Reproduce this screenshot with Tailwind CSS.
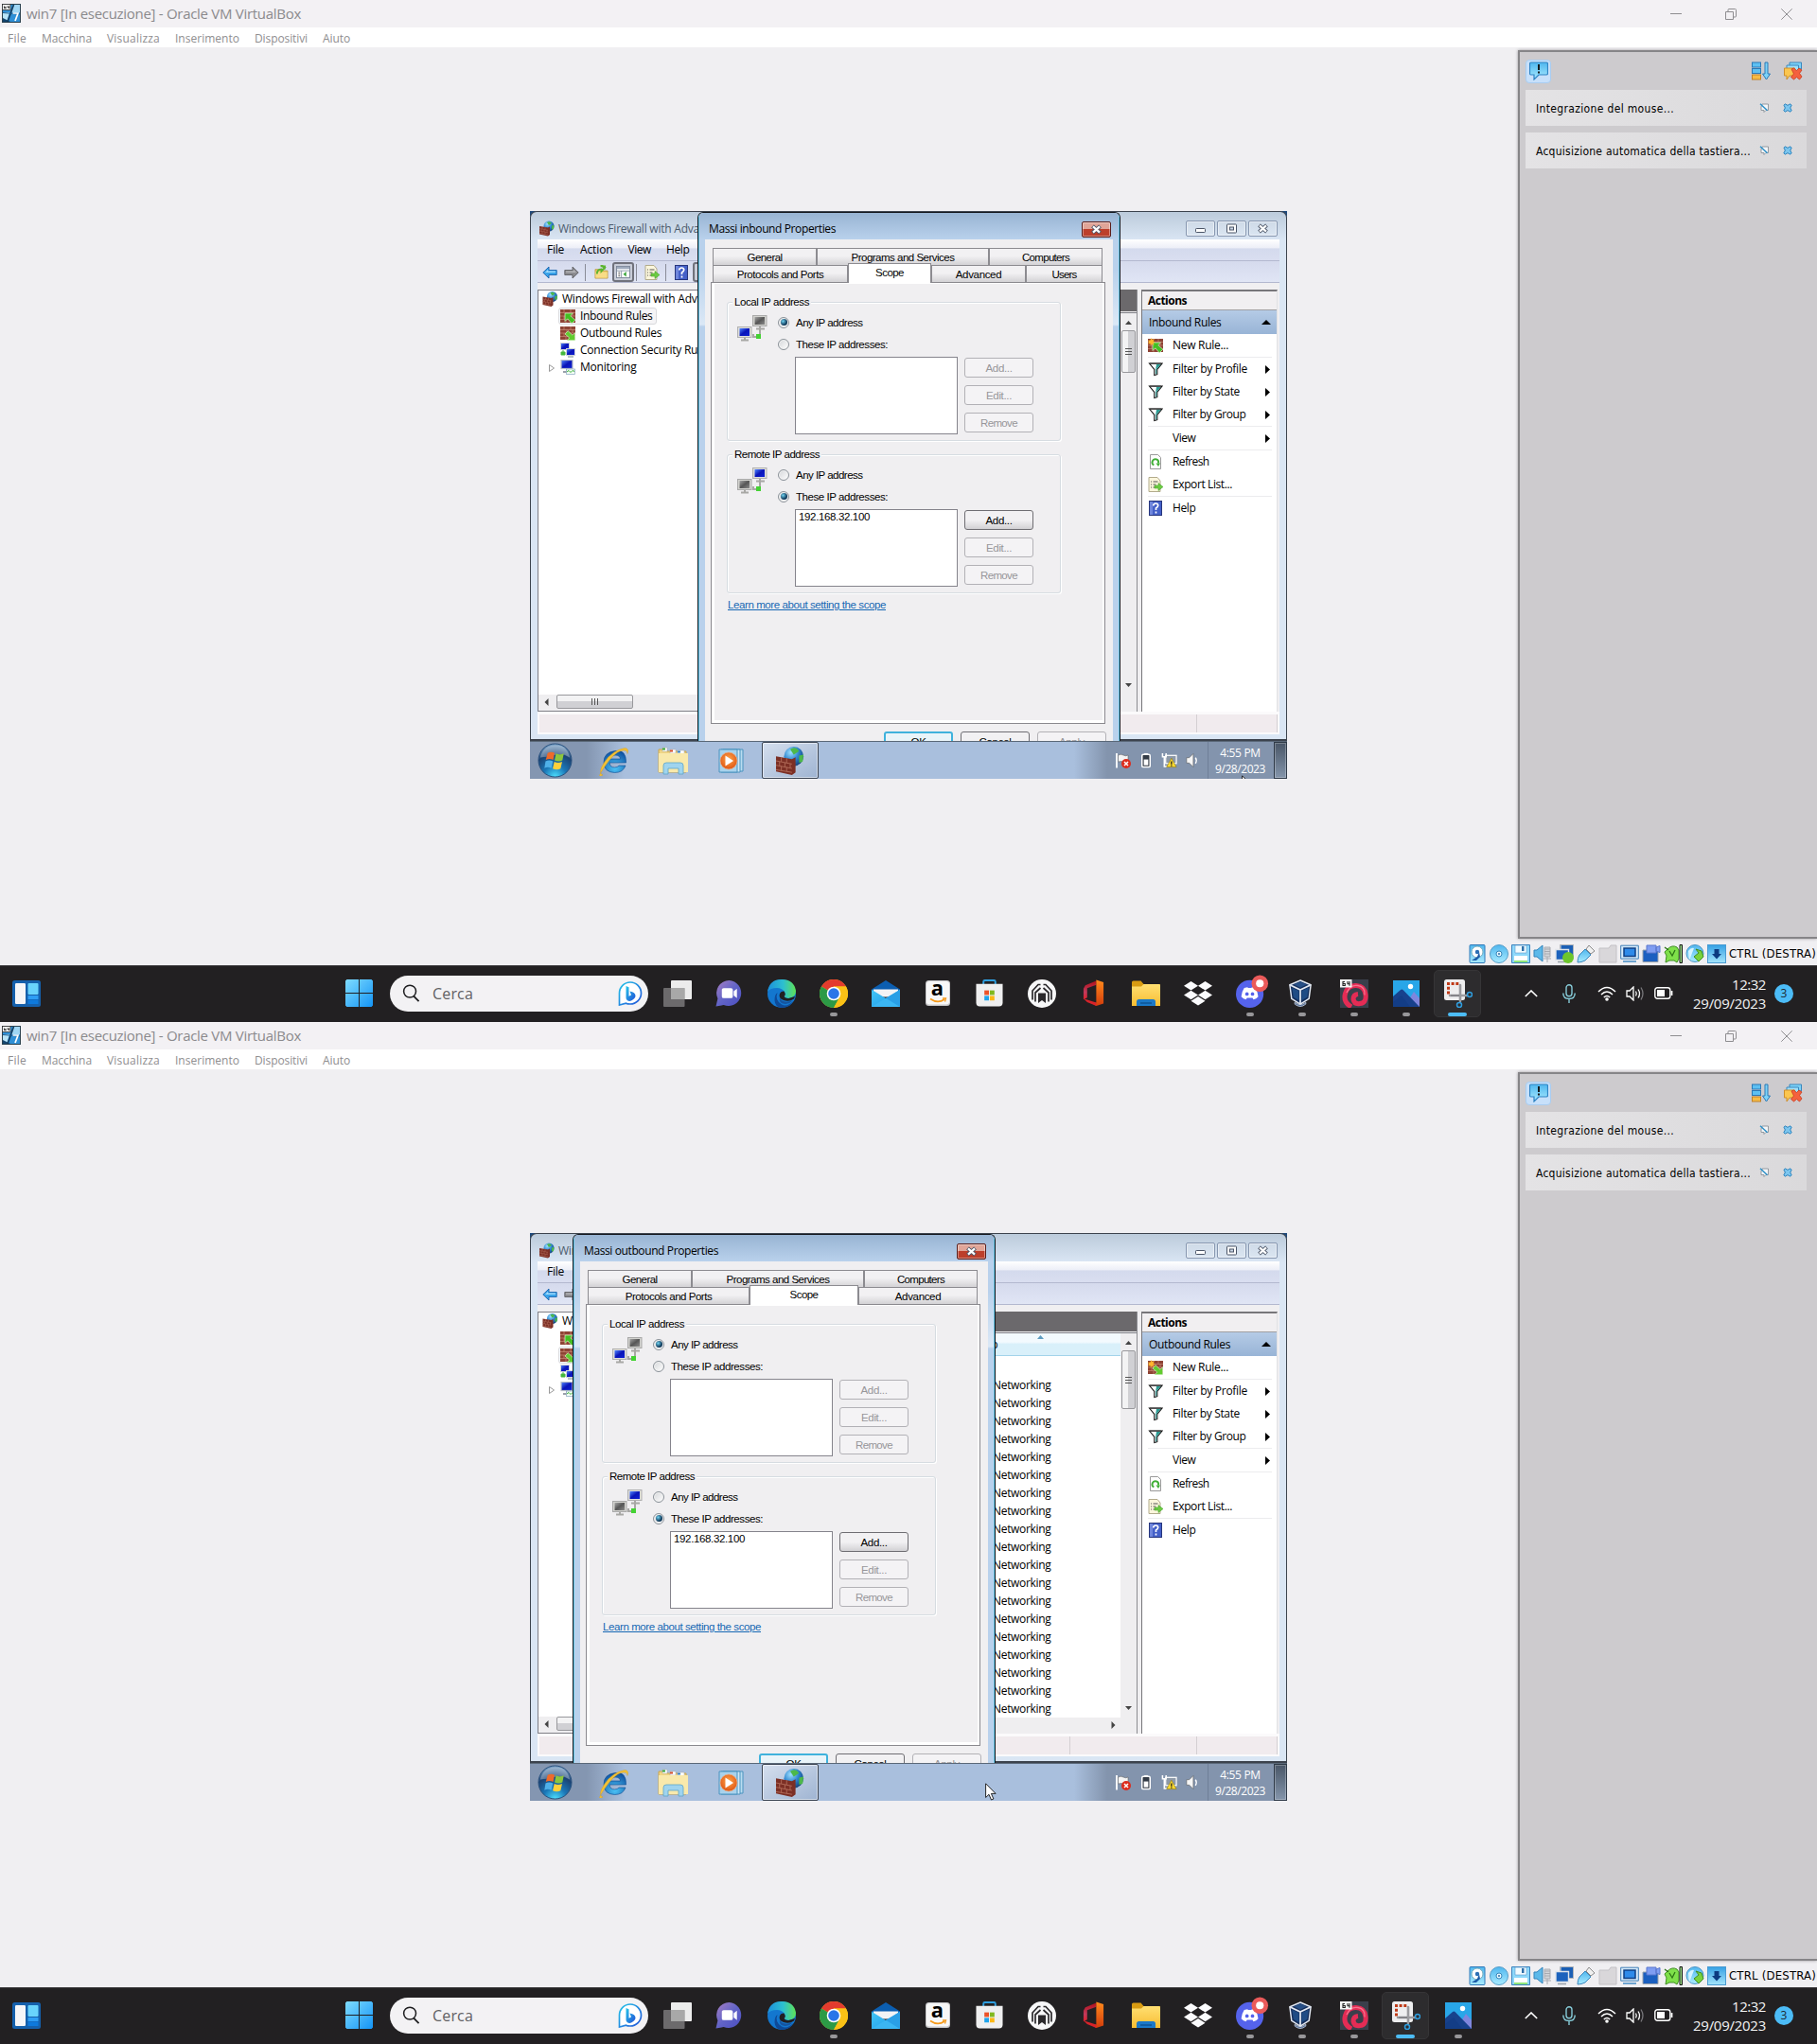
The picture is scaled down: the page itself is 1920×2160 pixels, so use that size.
<!DOCTYPE html>
<html lang="it">
<head>
<meta charset="utf-8">
<title>win7 [In esecuzione] - Oracle VM VirtualBox</title>
<script src="https://cdn.jsdelivr.net/npm/@tailwindcss/browser@4"></script>
</head>
<body class="w-[1920px] overflow-x-hidden bg-[#f0eff1] font-['Open_Sans','Noto_Sans',sans-serif] text-black">
<svg width="0" height="0" class="absolute" aria-hidden="true">
<defs>
<linearGradient id="g-win" x1="0" y1="0" x2="1" y2="1"><stop offset="0" stop-color="#7fdcff"/><stop offset="1" stop-color="#1494f5"/></linearGradient>
<linearGradient id="g-sky" x1="0" y1="0" x2="0" y2="1"><stop offset="0" stop-color="#35a0e4"/><stop offset="1" stop-color="#a4e4fb"/></linearGradient>
<linearGradient id="g-cyan" x1="0" y1="0" x2="0" y2="1"><stop offset="0" stop-color="#4fb6ee"/><stop offset="1" stop-color="#a9ebff"/></linearGradient>
<linearGradient id="g-teams" x1="0" y1="0" x2="1" y2="1"><stop offset="0" stop-color="#a87fc4"/><stop offset=".5" stop-color="#6264c7"/><stop offset="1" stop-color="#4a4dc0"/></linearGradient>
<linearGradient id="g-edge" x1="0" y1="0" x2="1" y2="0"><stop offset="0" stop-color="#1c8fdc"/><stop offset=".55" stop-color="#2dbfd0"/><stop offset="1" stop-color="#5fe255"/></linearGradient>
<linearGradient id="g-mail" x1="0" y1="0" x2="1" y2="1"><stop offset="0" stop-color="#42c6f7"/><stop offset="1" stop-color="#1f97e6"/></linearGradient>
<linearGradient id="g-fold" x1="0" y1="0" x2="0" y2="1"><stop offset="0" stop-color="#ffdf72"/><stop offset="1" stop-color="#f8bd32"/></linearGradient>
<linearGradient id="g-off" x1="0" y1="0" x2="0" y2="1"><stop offset="0" stop-color="#ff8a1c"/><stop offset="1" stop-color="#d23c0c"/></linearGradient>
<linearGradient id="g-offl" x1="0" y1="0" x2="0" y2="1"><stop offset="0" stop-color="#b0101a"/><stop offset=".6" stop-color="#c23a5c"/><stop offset="1" stop-color="#e0202a"/></linearGradient>
<linearGradient id="g-bing" x1="0" y1="0" x2="1" y2="1"><stop offset="0" stop-color="#25c5e8"/><stop offset="1" stop-color="#2152d9"/></linearGradient>
<radialGradient id="g-orb" cx=".5" cy="1" r="1"><stop offset="0" stop-color="#4de1ff"/><stop offset=".35" stop-color="#1b78b8"/><stop offset=".7" stop-color="#1b4374"/><stop offset="1" stop-color="#7ea6cb"/></radialGradient>
<radialGradient id="g-globe" cx=".35" cy=".3" r=".8"><stop offset="0" stop-color="#9fe0ff"/><stop offset=".5" stop-color="#2f86cf"/><stop offset="1" stop-color="#12386e"/></radialGradient>
<radialGradient id="g-ie" cx=".5" cy=".8" r=".8"><stop offset="0" stop-color="#4cc4f7"/><stop offset="1" stop-color="#0d4f9f"/></radialGradient>
<radialGradient id="g-wmp" cx=".5" cy=".4" r=".7"><stop offset="0" stop-color="#ffa54a"/><stop offset="1" stop-color="#d9480a"/></radialGradient>
<linearGradient id="g-scr" x1="0" y1="0" x2="1" y2="1"><stop offset="0" stop-color="#4f86ff"/><stop offset=".5" stop-color="#0a14b8"/><stop offset="1" stop-color="#0f22d6"/></linearGradient>
<linearGradient id="g-scrg" x1="0" y1="0" x2="1" y2="1"><stop offset="0" stop-color="#a4a4a4"/><stop offset=".5" stop-color="#565656"/><stop offset="1" stop-color="#8a8a8a"/></linearGradient>
</defs>
<symbol id="vm7" viewBox="0 0 20 20"><rect x=".5" y=".5" width="19" height="19" fill="#2f8fd6" stroke="#2b4250"/><path d="M1 9h7l-3 10H1z" fill="#b9e4f8"/><path d="M12 1h7v8h-9z" fill="#9fd6f4"/><path d="M1 15l8 4H1z" fill="#14456e"/><path d="M12.500 1L6 19" stroke="#123a5c" stroke-width="1.600"/><path d="M1 9.500l18 1.500" stroke="#1b5a8c"/><rect x=".5" y=".5" width="8.500" height="6" fill="#f2f2f2" stroke="#333" stroke-width=".8"/><path d="M2.500 2.500v2.300h1.700V3.600H2.500M6 2.300v1.500h1.800M7.500 2.300v2.700" stroke="#222" fill="none" stroke-width=".8"/><path d="M11.500 10h5.500L14 18" stroke="#fff" fill="none" stroke-width="1.700"/></symbol>
<symbol id="wall" viewBox="0 0 16 16"><rect y="1" width="16" height="14" fill="#8e4335"/><path d="M0 4.500h16M0 8h16M0 11.500h16M4 1v3.500M11 1v3.500M7 4.500V8M13 4.500V8M4 8v3.500M10 8v3.500M6 11.500V15" stroke="#c98a76" stroke-width=".7"/></symbol>
<symbol id="fw" viewBox="0 0 16 16"><circle cx="10" cy="5.500" r="5.500" fill="url(#g-globe)"/><path d="M8 1.500q3-2 5 1l-3 2zM13 5l2.500-.5-.5 4-2 .5z" fill="#4db84a"/><path d="M0 5.500l9 1.500 2-1v8.500l-2 1.500-9-2z" fill="#7c2f25"/><path d="M0 8l9 1.800M0 10.500l9 1.800M0 13l9 1.500M3 6v2.500M6 6.500v2.800M2 8.500v2.500M5 9v2.500M8 9.500v2.500M3 11v2.500M6 11.500V14" stroke="#b06a58" stroke-width=".5"/></symbol>
<symbol id="in" viewBox="0 0 16 16"><use href="#wall"/><path d="M5 5h8.500l-2.700 2.700 5 4.500-3.600 3.600-4.500-5L5 13.500z" fill="#43bf22" stroke="#d7f5c8" stroke-width=".7"/></symbol>
<symbol id="out" viewBox="0 0 16 16"><use href="#wall"/><path d="M15.500 15.700H7L9.700 13 5 9l3.200-3.300L13 10.200l2.500-2.500z" fill="#62cc30" stroke="#d7f5c8" stroke-width=".7"/></symbol>
<symbol id="newin" viewBox="0 0 16 16"><use href="#in"/><path d="M3.500 0l.8 2.100 2.700-1-1.300 2.400 2.300 1-2.400.8 1 2.600-2.500-1.400L3 8.500l-.6-2.600L0 6.500l1.200-2L0 2.500l2.300.2z" fill="#ffb52e"/></symbol>
<symbol id="newout" viewBox="0 0 16 16"><use href="#out"/><path d="M3.500 0l.8 2.100 2.700-1-1.300 2.400 2.300 1-2.400.8 1 2.600-2.500-1.400L3 8.500l-.6-2.600L0 6.500l1.200-2L0 2.500l2.300.2z" fill="#ffb52e"/></symbol>
<symbol id="csr" viewBox="0 0 16 16"><rect x=".5" y=".5" width="9" height="7" fill="url(#g-scr)" stroke="#cfd3da"/><rect x="6.500" y="6.500" width="9" height="7" fill="url(#g-scr)" stroke="#cfd3da"/><path d="M8 15h6" stroke="#9aa" stroke-width="1.400"/><path d="M1 10h4v3H1zM3 8v5" fill="#45b63d" stroke="#45b63d"/></symbol>
<symbol id="mon" viewBox="0 0 16 16"><rect x="1" y=".5" width="12" height="9" fill="url(#g-scr)" stroke="#b9bfc9" stroke-width="1.200"/><path d="M3 13h8M7 10v3" stroke="#9aa0aa" stroke-width="1.800"/><rect x="6.500" y="10" width="9" height="5.500" fill="#f2fff2" stroke="#8aa5c4" stroke-width=".7"/><path d="M7 13l2-1.500 2 2 2-2 2 1" stroke="#3dac3d" fill="none"/></symbol>
<symbol id="back" viewBox="0 0 16 16"><path d="M.8 8L7 2v3.500h8.200v5H7V14z" fill="#3aa4ea" stroke="#1c64ae" stroke-width=".9"/><path d="M3 8l3-3v1.500h8v1.300z" fill="#a6dcfb"/></symbol>
<symbol id="fwd" viewBox="0 0 16 16"><path d="M15.200 8L9 2v3.500H.8v5H9V14z" fill="#8c8c90" stroke="#5f5f63" stroke-width=".9"/><path d="M13 8l-3-3v1.500H2v1.300z" fill="#b5b5b8"/></symbol>
<symbol id="up" viewBox="0 0 16 16"><path d="M1 5h5l1 1.500h8V15H1z" fill="#ecc964" stroke="#b8923a" stroke-width=".8"/><path d="M1.500 8h13v6.500h-13z" fill="#f8dc86"/><path d="M3 10c0-3 2-5 5-5.200V7l4-4.200L8 .5V2.500" fill="none" stroke="#5cb531" stroke-width="2"/><path d="M7 .5h6l-1 5z" fill="#5cb531"/></symbol>
<symbol id="pane" viewBox="0 0 16 14"><rect x=".5" y=".5" width="15" height="13" fill="#fff" stroke="#7b8698"/><path d="M1 1h14v2.500H1z" fill="#9fabbd"/><path d="M1 5.500h14M6 5.500V13" stroke="#8c98ab"/><path d="M2.500 7.500h2M2.500 9.500h2M2.500 11.500h2" stroke="#555"/><path d="M11.500 6.500v6L8 9.500z" fill="#3aa53a"/></symbol>
<symbol id="export" viewBox="0 0 16 16"><path d="M1 .5h9L13 4v11.500H1z" fill="#fbf6dc" stroke="#b2ab8c"/><path d="M3 5h1M5.500 5h5M3 8h1M5.500 8h3M3 11h1M5.500 11h3" stroke="#555"/><path d="M7 9h4V6.500l5 4-5 4V12H7z" fill="#6ccb42" stroke="#3d9a24" stroke-width=".5"/></symbol>
<symbol id="help" viewBox="0 0 16 16"><rect x="1.500" y=".5" width="13" height="15" fill="#4460c8" stroke="#27367c"/><path d="M2 1h3v14H2z" fill="#6f86dc"/><path d="M5.800 5.500q0-2.500 2.500-2.500t2.400 2.300q0 1.400-2.200 2.700v2M8.500 11.500v2" stroke="#fff" fill="none" stroke-width="1.700"/></symbol>
<symbol id="filter" viewBox="0 0 16 16"><path d="M1.500 2h13.500L9.800 8.500v5.200l-3 .8v-6z" fill="#fff" stroke="#111" stroke-width="1.100"/><path d="M9 3h4.500L9.200 8.300v5h-1V8z" fill="#2c9c94"/><path d="M2 2.200h12" stroke="#444" stroke-width="1.300"/></symbol>
<symbol id="refresh" viewBox="0 0 16 16"><path d="M2.500.5h8l3 3v12h-11z" fill="#fdfdfd" stroke="#9a9a9a"/><path d="M6.300 11.500A3.300 3.300 0 1 1 11 9.500" fill="none" stroke="#3fae35" stroke-width="1.900"/><path d="M8.500 9.500h4.500l-2 3.500z" fill="#3fae35"/></symbol>
<symbol id="pcA" viewBox="0 0 32 28"><rect x="16.500" y=".5" width="14.500" height="11" fill="#d2d2ce" stroke="#a9a9a9"/><rect x="18.500" y="2" width="10.500" height="8" fill="url(#g-scrg)"/><path d="M20 14.500h9M24 12v11h-7v-3" stroke="#a8a8a5" fill="none" stroke-width="2"/><path d="M20 20h5v5h-5z" fill="#44d233"/><rect x=".5" y="12.500" width="14.500" height="11" fill="#dededc" stroke="#b0b0b0"/><rect x="2.500" y="14" width="10.500" height="8" fill="url(#g-scr)"/><path d="M4 26.500h8M8 24v2" stroke="#a8a8a5" stroke-width="2"/></symbol>
<symbol id="pcB" viewBox="0 0 32 28"><rect x="16.500" y=".5" width="14.500" height="11" fill="#dededc" stroke="#b0b0b0"/><rect x="18.500" y="2" width="10.500" height="8" fill="url(#g-scr)"/><path d="M20 14.500h9M24 12v11h-7v-3" stroke="#a8a8a5" fill="none" stroke-width="2"/><path d="M20 20h5v5h-5z" fill="#44d233"/><rect x=".5" y="12.500" width="14.500" height="11" fill="#d2d2ce" stroke="#a9a9a9"/><rect x="2.500" y="14" width="10.500" height="8" fill="url(#g-scrg)"/><path d="M4 26.500h8M8 24v2" stroke="#a8a8a5" stroke-width="2"/></symbol>
<symbol id="orb" viewBox="0 0 38 38"><circle cx="19" cy="19" r="18" fill="url(#g-orb)" stroke="#29507c"/><path d="M3 16Q6 3 19 2.500T35 16Q27 11 19 13T3 16z" fill="#fff" opacity=".3"/><path d="M11 11q4-2 7.500 0L17 18.500q-4-2-8 0z" fill="#ee6a2a"/><path d="M20 11.500q4 2 8.500 0L27 19q-4 2-8.500 0z" fill="#8cc63e"/><path d="M8.700 20q4-2 8 0L15 27.500q-4-2-7.500 0z" fill="#4fb0e8"/><path d="M18.200 20.500q4 2 8.500 0L25 28q-4 2-8.500 0z" fill="#fcd03a"/></symbol>
<symbol id="ie" viewBox="0 0 32 32"><path d="M28.500 18H11q.5 5 5.500 5 3 0 4.500-2h7q-2.500 7.500-11.500 7.500Q5 28 5 17.500T17 5.500 28.500 18zM11 14h11.500q-.5-4-5.500-4t-6 4z" fill="url(#g-ie)" stroke="#0c4a92" stroke-width=".6"/><path d="M4 31Q-2 29 6 17T27 2.500q5 0 3 6 0-5-7-3T6 22 4 31z" fill="#f2c136" stroke="#d59a1c" stroke-width=".4"/></symbol>
<symbol id="explorer7" viewBox="0 0 32 30"><path d="M1 3h8l1 2h20v22H1z" fill="#f0d584" stroke="#caa64c"/><path d="M5 1h5v4H5zM13 3h6v4h-6zM21 4h7v4h-7z" fill="#fff" stroke="#aaa" stroke-width=".5"/><path d="M5 1.500h3v2H5z" fill="#36a436"/><path d="M13 3.500h3v2h-3z" fill="#d44b28"/><path d="M21 4.500h3v2h-3z" fill="#347fc4"/><path d="M1 7h31v20H1z" fill="#f9e9ab"/><path d="M6 29v-9q0-3 3-3h15q3 0 3 3v9h-5v-6H11v6z" fill="#9fd4ee" stroke="#5ea4c8" stroke-width=".8"/></symbol>
<symbol id="wmp" viewBox="0 0 30 26"><path d="M5 1h21v23H5z" fill="#b9dcf0" stroke="#4b93bf"/><path d="M3 1h20v24H3z" fill="#cfe8f6" stroke="#4b93bf"/><path d="M1 1h19v24H1z" fill="#a8d2ec" stroke="#4b93bf"/><circle cx="11" cy="13" r="9" fill="url(#g-wmp)" stroke="#e9b08a" stroke-width=".7"/><path d="M7.500 7.500l8.500 5.500-8.500 5.500z" fill="#fff"/></symbol>
<symbol id="flag" viewBox="0 0 18 18"><path d="M2 1v15.500" stroke="#fff" stroke-width="1.800"/><path d="M3.500 3q3-1.500 5.500 0t5 0v7q-3 1-5 0t-5.500 0z" fill="#f4f4f4" stroke="#555" stroke-width=".5"/><circle cx="12" cy="12" r="5" fill="#dd2c1c"/><path d="M10 10l4 4M14 10l-4 4" stroke="#fff" stroke-width="1.500"/></symbol>
<symbol id="bat7" viewBox="0 0 12 18"><rect x="1.500" y="2.500" width="9" height="14" rx="1.500" fill="#333b46" stroke="#fff" stroke-width="1.600"/><path d="M4 1h4v1.500H4z" fill="#fff"/><rect x="3.500" y="8" width="5" height="6.500" fill="#fff"/></symbol>
<symbol id="net7" viewBox="0 0 18 18"><rect x="5" y="3.500" width="12" height="9" fill="#8d99a8" stroke="#fff" stroke-width="1.300"/><path d="M1.500 1v4h4V1M3.500 5v11h3" stroke="#fff" fill="none" stroke-width="1.600"/><path d="M11.500 6.500l5.500 10H6z" fill="#fbd92e" stroke="#8c7610" stroke-width=".6"/><path d="M11.500 10v3.500M11.500 14.300v1.200" stroke="#222" stroke-width="1.400"/></symbol>
<symbol id="spk7" viewBox="0 0 16 18"><path d="M2 6h3l4.500-4.500v15L5 12H2z" fill="#f6f6f6" stroke="#555" stroke-width=".6"/><path d="M12 6q2 3 0 6.500" stroke="#fff" fill="none" stroke-width="1.500"/></symbol>
<symbol id="cursor" viewBox="0 0 12 19"><path d="M.6.800v14.700l3.400-3.200 2.500 5.700 2.400-1-2.500-5.600h4.700z" fill="#fff" stroke="#111" stroke-width=".9"/></symbol>
<symbol id="s-hdd" viewBox="0 0 20 20"><rect x="2" y=".5" width="16" height="19" rx="1" fill="url(#g-cyan)" stroke="#2f78b8"/><circle cx="10" cy="8" r="6" fill="#fff" stroke="#7ab"/><circle cx="10" cy="8" r="2.200" fill="#2d6fb5"/><path d="M4 17l6-4 2-5 1 5-4 4z" fill="#1c5ca8"/></symbol>
<symbol id="s-cd" viewBox="0 0 20 20"><circle cx="10" cy="10" r="9.500" fill="url(#g-cyan)" stroke="#559dc8"/><circle cx="10" cy="10" r="3" fill="#e8f8ff" stroke="#3b86ba"/><circle cx="10" cy="10" r="1" fill="#2f6fa5"/></symbol>
<symbol id="s-fd" viewBox="0 0 20 20"><path d="M.5.500h19v19H.5z" fill="#8ed8fa" stroke="#3b82be"/><path d="M4 1h12v8H4z" fill="#f2fbff" stroke="#5a9ccc" stroke-width=".6"/><path d="M11 2h2.500v5H11z" fill="#2f6fa8"/><path d="M3 12h14v7H3z" fill="#fff"/><path d="M3 17h14v2H3z" fill="#8fe67c"/></symbol>
<symbol id="s-au" viewBox="0 0 20 20"><path d="M1 6h3l6-5v17l-6-5H1z" fill="#5cb9ea" stroke="#3484bb"/><path d="M12 3h6v10h-6zM11 15h8M15 13v6" fill="#d4d6da" stroke="#a8aab0"/><path d="M12 5h6M12 7.500h6M12 10h6" stroke="#a8aab0"/></symbol>
<symbol id="s-net" viewBox="0 0 20 20"><path d="M6 .5h13.500v12H6z" fill="#1b5fb5" stroke="#e8e8e8"/><path d="M5.500.500h14v12h-14z" fill="none" stroke="#8a9099" stroke-width=".6"/><path d="M1 5.500h13.500v11H1z" fill="#1c62bd" stroke="#dfe4ea" stroke-width="1.400"/><path d="M3 18.500h9" stroke="#9aa2ab" stroke-width="1.500"/></symbol>
<symbol id="s-netg" viewBox="0 0 20 20"><use href="#s-net"/><circle cx="14" cy="14" r="6" fill="#6dc62c"/></symbol>
<symbol id="s-usb" viewBox="0 0 20 20"><path d="M13 1l6 6-4 3-5-5z" fill="#f0f0f0" stroke="#8a8a8a"/><path d="M9 5l6 6-6 6q-4 2-8 2 0-5 2-8z" fill="url(#g-cyan)" stroke="#3b88be"/></symbol>
<symbol id="s-sf" viewBox="0 0 20 20"><path d="M1 4h10l2-3h6v18H1z" fill="#d9d7da" stroke="#c3c1c5"/></symbol>
<symbol id="s-dsp" viewBox="0 0 20 20"><path d="M.7 1.200h18.600v14H.7z" fill="#d8ecfb" stroke="#3f7db6"/><path d="M4 4h12v8.500H4z" fill="#2f8bea" stroke="#0e3f85" stroke-width="1.500"/><path d="M3 18h14" stroke="#6ea4d0" stroke-width="2"/></symbol>
<symbol id="s-rec" viewBox="0 0 20 20"><path d="M1 6h16v12.500H1z" fill="#1b5fc0" stroke="#9aa2ab"/><path d="M5 1h10v8H5zM15 3l4-1.500v7L15 7z" fill="#7f9df2" stroke="#5a76cc"/></symbol>
<symbol id="s-cpu" viewBox="0 0 20 20"><path d="M4 5q5-5 10-2l2 3v9l-2 4-3-2H6l-4 2 1-7-2-4z" fill="#7fe04a" stroke="#3f8e22"/><path d="M6 7l3 5 3-6M1 3l4 3" stroke="#2c7416" fill="none" stroke-width="1.300"/><path d="M17 .5h2.500v19H17z" fill="#9fe08a" stroke="#111"/></symbol>
<symbol id="s-mouse" viewBox="0 0 20 20"><circle cx="10" cy="9.500" r="9" fill="url(#g-cyan)" stroke="#4a94c6"/><path d="M9 13l5-4-3-4 6 2 2 6-5 5z" fill="#79d23c" stroke="#3f8e22"/><path d="M3 7q3-4 6-3L4 17z" fill="#d7f4ff"/></symbol>
<symbol id="s-kbd" viewBox="0 0 20 20"><rect x=".5" y=".5" width="19" height="19" fill="url(#g-sky)" stroke="#4a9bd2"/><path d="M7.500 5h5v5H15l-5 5.500L5 10h2.500z" fill="#0c3a80"/></symbol>
<symbol id="n-bub" viewBox="0 0 20 20"><path d="M2 1h16q1.500 0 1.500 1.500v10q0 1.500-1.500 1.500h-8l-5 5v-5H2Q.5 14 .5 12.500v-10Q.5 1 2 1z" fill="url(#g-cyan)" stroke="#2e83c4" stroke-width="1.200"/><path d="M10 3v6M10 10.500v2" stroke="#111" stroke-width="1.900"/></symbol>
<symbol id="n-sort" viewBox="0 0 20 20"><rect x=".5" y="1" width="9" height="5" fill="#5dc0f2" stroke="#2b79b6"/><rect x=".5" y="7.500" width="9" height="5" fill="#5dc0f2" stroke="#2b79b6"/><rect x=".5" y="14" width="9" height="5" fill="#f6bb45" stroke="#c0812a"/><path d="M14 1h3v12h2.500l-4 6-4-6H14z" fill="#7dd3f8" stroke="#2b79b6"/></symbol>
<symbol id="n-clr" viewBox="0 0 20 20"><path d="M6 1h12.500v7H6z" fill="#7dd3f8" stroke="#3a87be"/><path d="M3 4h12.500v8H3z" fill="#9fe0fb" stroke="#3a87be"/><path d="M.5 7h11v8H6l-3 4v-4H.5z" fill="#fbc64f" stroke="#cf8f2c"/><path d="M8 8l2.500-1 3 2.500L16 7l3 2-2.500 3.500L19 16l-2.500 3-3-2.500L10.500 19 7.500 16.500l3-3.500z" fill="#f4613e" stroke="#c93a1c" stroke-width=".8"/></symbol>
<symbol id="n-pin" viewBox="0 0 10 10"><path d="M3 1h6.500v6.500H7L5 9.500v-2H2V4z" fill="#f4f6f8" stroke="#8a9199" stroke-width=".9"/><path d="M1 .8l7.500 7" stroke="#2e90c8" stroke-width="1.500"/></symbol>
<symbol id="n-x" viewBox="0 0 10 10"><path d="M1 2.200L2.300.8 5 2.400 7.700.8 9.200 2.200 7.700 5l1.500 2.800L7.700 9.200 5 7.600 2.300 9.200.8 7.800 2.400 5z" fill="#7cc6ef" stroke="#2d83bd" stroke-width="1"/></symbol>
<symbol id="widgets" viewBox="0 0 30 28"><rect width="30" height="28" rx="2.500" fill="#1560ac"/><rect x="3" y="3" width="11" height="22" rx="1.200" fill="#f6f6f8"/><rect x="16.500" y="3" width="11" height="12" rx="1" fill="#69d3fc"/><rect x="16.500" y="16" width="11" height="4" fill="#2e9df4"/><rect x="16.500" y="20.500" width="11" height="4.500" fill="#0e79dc"/></symbol>
<symbol id="start" viewBox="0 0 29 29"><path d="M1.500 0H14v14H0V1.500zM15 0h12.500L29 1.500V14H15zM0 15h14v14H1.500L0 27.500zM15 15h14v12.500L27.500 29H15z" fill="url(#g-win)"/></symbol>
<symbol id="glass" viewBox="0 0 20 20"><circle cx="8.500" cy="8" r="6.800" fill="none" stroke="#1d1d1f" stroke-width="1.600"/><path d="M13 13.500l5.500 5.500" stroke="#1d1d1f" stroke-width="1.900"/></symbol>
<symbol id="bing" viewBox="0 0 26 26"><path d="M1.500 25V12.500A11.500 11.500 0 1 1 13 24q-3 0-4.500-.8Z" fill="#fff" stroke="url(#g-bing)" stroke-width="1.700"/><path d="M8.500 5l3 1.200v9.500l2.500-1.200-1.500-4q6 1.200 6 4.800 0 3-4.500 5.200-2 1-4-.3-1.500-1-1.500-2.700z" fill="url(#g-bing)"/></symbol>
<symbol id="tview" viewBox="0 0 30 28"><rect x="8" y="0" width="22" height="20" rx="1" fill="#ececec"/><rect x="0" y="8" width="22.500" height="20" rx="1" fill="#8b8a8b" fill-opacity=".7"/><path d="M8 8h14.500v12H8z" fill="#a8a8a8"/></symbol>
<symbol id="teams" viewBox="0 0 30 30"><path d="M15 1A14 14 0 1 1 9 28L.5 29.500 2.500 21A14 14 0 0 1 15 1z" fill="url(#g-teams)"/><rect x="7" y="9.500" width="12" height="11" rx="2" fill="#fff"/><path d="M20 13l3.500-3v10.500L20 17.500z" fill="#fff"/></symbol>
<symbol id="edge" viewBox="0 0 30 30"><circle cx="15" cy="15" r="15" fill="#1377cf"/><path d="M0 13Q2 0 15 0t15 12q0 6-6 7.500-5 1-6.500-1.500 2-3 0-5.500Q15 9 10 9 3 9 0 13z" fill="url(#g-edge)"/><path d="M10.500 14q-3 8 4.500 12.500 6 3 12-3.500-3 7-12 7-7-.5-7.500-8Q7.500 16 10.500 14z" fill="#0e4a98"/><path d="M17.500 12.500q2.500 3.500 0 5.500 2 3 6.500 1.500l5-1.500-1 2.500q-5 3.500-11 1.500t-4-7q1-3 4.500-2.500z" fill="#211f21"/><path d="M13 19q2 7 13.500 3.500Q21 28 15 25q-3-2-2-6z" fill="#15549f"/></symbol>
<symbol id="chrome" viewBox="0 0 30 30"><circle cx="15" cy="15" r="15" fill="#fbc116"/><path d="M15 15L2 7.500A15 15 0 0 1 28 7.500H15z" fill="#e33b2e"/><path d="M2 7.500A15 15 0 0 0 15 30l6.500-11.200L15 15z" fill="#2c9a46"/><path d="M28 7.500H15V22l6-3L15 30A15 15 0 0 0 28 7.500z" fill="#fbc116"/><circle cx="15" cy="15" r="7.300" fill="#fff"/><circle cx="15" cy="15" r="5.800" fill="#2a76e8"/></symbol>
<symbol id="mail" viewBox="0 0 30 28"><path d="M15 0l15 9.500v6H0v-6z" fill="#0c5eb0"/><path d="M2 9.500h26v8H2z" fill="#f3f3f5"/><path d="M0 9.800L15 19l15-9.200V28H0z" fill="url(#g-mail)"/><path d="M15 18.800L30 28V10z" fill="#2a9fe6"/><path d="M0 28L15 18.800 30 28z" fill="#3bb6f3"/></symbol>
<symbol id="amazonbg" viewBox="0 0 26 27"><rect width="26" height="27" rx="3.500" fill="#c8c8ca"/><rect x="1" y="1" width="24" height="24.500" rx="3" fill="#f7f7f7"/><path d="M5 19.500q8 5.500 15 .5" stroke="#f59a1b" stroke-width="1.700" fill="none"/><path d="M18 19h3.500l-1 3.500" fill="none" stroke="#f59a1b" stroke-width="1.300"/></symbol>
<symbol id="store" viewBox="0 0 30 30"><path d="M8.500 6V2.500Q8.500 1 10 1h10q1.500 0 1.500 1.500V6" fill="none" stroke="#2f9fe0" stroke-width="2"/><path d="M.5 5h29v20q0 4.500-4 4.500h-21q-4 0-4-4.500z" fill="#efeff0"/><path d="M9.500 12h5v5h-5z" fill="#ec5228"/><path d="M15.500 12h5v5h-5z" fill="#80b81e"/><path d="M9.500 18h5v5h-5z" fill="#1ea3ec"/><path d="M15.500 18h5v5h-5z" fill="#fbb816"/></symbol>
<symbol id="omen" viewBox="0 0 30 30"><circle cx="15" cy="15" r="15" fill="#f7f7f8"/><path d="M5 21.500V12L11 5.500h2.500M25 21.500V12L19 5.500h-2.500M13.500 9L8 14v9.500M16.500 9l5.500 5v9.500" stroke="#2b292c" stroke-width="1.700" fill="none"/><path d="M11 25V14.500h8V25l-4-3z" fill="#2b292c"/></symbol>
<symbol id="office" viewBox="0 0 26 30"><path d="M16 1.500L4 6.500 2 10v12l4-2V9.500L16 6z" fill="url(#g-offl)"/><path d="M16 .5l8 2.500v23.500L16 29l-5-3 5-.5z" fill="url(#g-off)"/><path d="M2 21l14 4.500V29L6 25z" fill="#d8232a"/></symbol>
<symbol id="folder" viewBox="0 0 30 28"><path d="M0 2q0-1.500 1.500-1.500h8L12.500 4H30v6H0z" fill="#d99c12"/><path d="M0 6.500h10L12.500 4H28.500Q30 4 30 5.500V27H0z" fill="url(#g-fold)"/><path d="M5 27v-4.500Q5 20 7.500 20h15q2.500 0 2.500 2.500V27z" fill="#1a78c8"/><path d="M9 24h12" stroke="#0d5596" stroke-width="1.500"/></symbol>
<symbol id="dropbox" viewBox="0 0 30 26"><path d="M7.500 0L15 4.800 7.500 9.600 0 4.800zM22.500 0L30 4.800 22.500 9.600 15 4.800zM7.500 9.700L15 14.500l-7.500 4.800L0 14.500zM22.500 9.700l7.500 4.800-7.500 4.800-7.500-4.800zM15 16l7.500 4.800L15 25.500l-7.500-4.700z" fill="#fbfbfd"/></symbol>
<symbol id="discord" viewBox="0 0 36 36"><circle cx="15" cy="21" r="15" fill="#5563ec"/><path d="M9 14.500l3.500-1 .8 1h3.400l.8-1 3.500 1q3 4.500 3.200 9.500-2 2.500-5.200 3l-1-1.800h-6L11 27q-3-.5-5.200-3Q6 19 9 14.500z" fill="#fff"/><circle cx="12" cy="21" r="1.900" fill="#5563ec"/><circle cx="18" cy="21" r="1.900" fill="#5563ec"/><circle cx="26" cy="9.500" r="9" fill="#ea5a5a"/><circle cx="26" cy="9.500" r="4.200" fill="#fff"/></symbol>
<symbol id="vbox" viewBox="0 0 26 30"><path d="M7 25q6 5 12 0v2q-6 5-12 0z" fill="#4e6a94" stroke="#aebbd0"/><path d="M13 1l11.500 5-2 15L13 27 3.500 21l-2-15z" fill="#152f5c" stroke="#e3e9f3" stroke-width="1.500"/><path d="M1.500 6L13 11.500 24.500 6M13 11.500V27" stroke="#e3e9f3" stroke-width="1.800" fill="none"/><path d="M4 9l7.500 3.500V23L5.500 19.500zM22 9l-7.500 3.500V23l6-3.500z" fill="#1f4c85"/><path d="M6 5.500l7-3 7 3-7 3.500z" fill="#274f86"/></symbol>
<symbol id="debian" viewBox="0 0 30 30"><rect width="30" height="30" fill="#3a3f4b"/><path d="M12 29Q3 24 5.500 15T17 6.500q9 .5 10 9.500t-6 9.500q-6 1-7-4.500 0-5 5-5.500" fill="none" stroke="#e42c55" stroke-width="5"/><path d="M7 14q4-9 12-7.500t7 10" fill="none" stroke="#f5748f" stroke-width="1.300"/><rect x="0" y="0" width="12.500" height="8.500" fill="#f6f6f6"/><path d="M5 2.500H3v4h2.300v-2H3M8 2v2.700h2.500M10 2v4.700" fill="none" stroke="#222" stroke-width="1.100"/></symbol>
<symbol id="photos" viewBox="0 0 28 28"><rect width="28" height="28" fill="#29a6e8"/><path d="M12 28L22 12l6 7v9z" fill="#7f86dd"/><path d="M0 17l8-7q1.500-1 3 .5L28 28H0z" fill="#17418c"/><path d="M0 23l9-7 9 12H0z" fill="#0f3a80" opacity=".5"/><circle cx="18.500" cy="6.500" r="2.700" fill="#fff"/></symbol>
<symbol id="snip" viewBox="0 0 30 30"><rect width="22" height="22" rx="2.500" fill="#eeeeef"/><path d="M4.500 15.500v-11h11" fill="none" stroke="#bf3a17" stroke-width="3" stroke-dasharray="3 1.700"/><path d="M6 17h18M17 6v17" stroke="#9b9b9f" stroke-width="2.600" stroke-linecap="round"/><path d="M7 17h9" stroke="#6d6d72"/><circle cx="27" cy="16" r="2.500" fill="none" stroke="#2f9fe0" stroke-width="1.500"/><circle cx="16" cy="27" r="2.500" fill="none" stroke="#2f9fe0" stroke-width="1.500"/></symbol>
<symbol id="chev" viewBox="0 0 14 8"><path d="M.8 7L7 1l6.200 6" fill="none" stroke="#fff" stroke-width="1.600"/></symbol>
<symbol id="mic" viewBox="0 0 14 20"><rect x="4" y=".8" width="6" height="12" rx="3" fill="none" stroke="#86cbd8" stroke-width="1.400"/><path d="M.8 9.500q0 6 6.200 6t6.200-6M7 15.500V20" fill="none" stroke="#86cbd8" stroke-width="1.400"/></symbol>
<symbol id="wifi" viewBox="0 0 20 16"><path d="M1 6q9-9 18 0M4 9q6-6 12 0M6.800 12q3.200-3 6.400 0" fill="none" stroke="#fff" stroke-width="1.500"/><circle cx="10" cy="14" r="1.800" fill="#fff"/></symbol>
<symbol id="vol" viewBox="0 0 20 16"><path d="M1 5h3l4-4v14l-4-4H1z" fill="none" stroke="#fff" stroke-width="1.300"/><path d="M10.500 5.500q1.500 2.500 0 5M13 3.500q3 4.500 0 9" fill="none" stroke="#fff" stroke-width="1.300"/><path d="M16 1.500q4 6.500 0 13" fill="none" stroke="#77767a" stroke-width="1.300"/></symbol>
<symbol id="batt" viewBox="0 0 20 13"><rect x=".8" y=".8" width="16" height="11.400" rx="2.500" fill="none" stroke="#fff" stroke-width="1.400"/><rect x="3" y="3" width="8" height="7" fill="#fff"/><path d="M18.500 4v5" stroke="#fff" stroke-width="1.800"/></symbol>
</svg>

<main id="app" class="flex flex-col"></main>

<script>
const SEG = "font-['Open_Sans','Noto_Sans',sans-serif]";
const svg = (id, cls) => `<svg class="shrink-0 ${cls}"><use href="#${id}"/></svg>`;
// label set to a given advance width by tracking
const t = (text, w, cls = '') => `<span class="inline-block whitespace-nowrap ${cls}" data-w="${w}">${text}</span>`;

const titleBar = () => `
<header class="flex h-[29px] items-center bg-[#f3f1f4] pl-[2px] text-[#8b8a8d]">
  ${svg('vm7', 'size-5 -mt-px')}
  ${t('win7 [In esecuzione] - Oracle VM VirtualBox', 290, 'ml-1.5 text-[15px] leading-[20px] -mt-px')}
  <div class="ml-auto flex items-center pr-[26px]">
    <svg class="h-3 w-3" viewBox="0 0 12 12"><path d="M0 5.500h12" stroke="#8e8d90"/></svg>
    <svg class="ml-[46px] h-3 w-3" viewBox="0 0 12 12"><path d="M.5 3.500h8v8h-8zM3 3V1.500Q3 .5 4 .5h6.500q1 0 1 1V8q0 1-1 1H9" fill="none" stroke="#8e8d90"/></svg>
    <svg class="ml-[47px] h-3 w-3" viewBox="0 0 12 12"><path d="M.3.300l11.400 11.400M11.700.300L.3 11.700" stroke="#8e8d90"/></svg>
  </div>
</header>
<nav class="flex h-[21px] items-center gap-4 bg-white pl-2 pt-[2px] text-[12px] leading-[18px] text-[#8f8e90]">
  ${t('File', 20)}${t('Macchina', 53)}${t('Visualizza', 56)}${t('Inserimento', 68)}${t('Dispositivi', 56)}${t('Aiuto', 29)}
</nav>`;

const note = (text, w) => `
<div class="flex h-[38px] items-center bg-linear-to-r from-[#e4e3e5] to-[#dad9db] pl-[11px] pr-[15px] font-['DejaVu_Sans_Condensed','DejaVu_Sans',sans-serif] text-[12px] [font-stretch:condensed]">
  ${t(text, w, 'mt-[2px]')}
  ${svg('n-pin', 'ml-auto size-[10px]')}
  ${svg('n-x', 'ml-[15px] size-[10px]')}
</div>`;

const notifications = () => `
<aside class="ml-auto mt-[3px] h-[939px] w-[316px] border-2 border-r-0 border-[#868588] bg-[#cdcbce] pl-[6px] pr-[11px] shadow-[0_0_3px_#98979a]">
  <div class="flex h-[40px] items-center">
    <div class="flex h-[25px] w-[27px] items-center justify-center rounded-sm border border-[#a9cdf1] bg-[#c7e0fa]">${svg('n-bub', 'size-5')}</div>
    ${svg('n-sort', 'ml-auto size-5')}${svg('n-clr', 'ml-[14px] mr-1 size-5')}
  </div>
  <div class="flex flex-col gap-[7px]">
    ${note('Integrazione del mouse...', 146)}
    ${note('Acquisizione automatica della tastiera...', 227)}
  </div>
</aside>`;

const statusIcons = net => `
<footer class="absolute bottom-[2px] right-0 flex h-5 items-center gap-[3px] pr-px">
  ${['s-hdd', 's-cd', 's-fd', 's-au', net, 's-usb', 's-sf', 's-dsp', 's-rec', 's-cpu', 's-mouse', 's-kbd'].map(i => svg(i, 'size-5')).join('')}
  ${t('CTRL (DESTRA)', 92, "font-['DejaVu_Sans_Condensed','DejaVu_Sans',sans-serif] text-[13px] [font-stretch:condensed]")}
</footer>`;

const winBtn = glyph => `<div class="flex h-[17px] w-[31px] items-center justify-center rounded-[2px] border border-[#8797b0] bg-white/15 shadow-[inset_0_0_0_1px_rgba(255,255,255,.45)]"><svg class="h-[11px] w-[13px]" viewBox="0 0 13 11">${glyph}</svg></div>`;
const xGlyph = '<path d="M2.500 2l8 7M10.500 2l-8 7" stroke="#4b5567" stroke-width="4"/><path d="M3 2.400l7 6.200M10 2.400l-7 6.200" stroke="#fff" stroke-width="2.200"/>';

const treeRow = (icon, text, w, sel) => `
<div class="flex h-[18px] items-center pl-[21px]">
  <div class="flex h-[18px] items-center rounded-[3px] border pl-[1px] pr-[3px] ${sel ? 'border-[#d9d9dc] bg-[#f5f4f6]' : 'border-transparent'}">${svg(icon, 'size-4')}${t(text, w, 'ml-[5px]')}</div>
</div>`;

const tree = o => `
<div class="relative flex h-[446px] w-[420px] flex-col border border-[#7f7f86] bg-white">
  <div class="flex h-[18px] items-center pl-1">${svg('fw', 'h-4 w-[17px]')}${t('Windows Firewall with Advanced Security', 221, 'ml-1')}</div>
  ${treeRow('in', 'Inbound Rules', 76.5, !o)}
  ${treeRow('out', 'Outbound Rules', 86, o)}
  ${treeRow('csr', 'Connection Security Rules', 139)}
  <div class="flex items-center"><svg class="ml-[11px] mr-[-17px] mt-[2px] h-2 w-[6px]" viewBox="0 0 6 8"><path d="M.5.500v7l5-3.500z" fill="#fff" stroke="#999"/></svg>${treeRow('mon', 'Monitoring', 59.5)}</div>
  <div class="mt-auto flex h-[17px] items-start bg-[#efeef0] pl-[6px]">
    <svg class="mt-1 h-2 w-[5px]" viewBox="0 0 5 8"><path d="M4.500 0v8L.5 4z" fill="#444"/></svg>
    <div class="ml-[8px] flex h-[15px] w-[81px] items-center justify-center gap-[2px] rounded-[2px] border border-[#98989c] bg-linear-to-b from-[#f3f3f4] from-50% to-[#d0d0d4] to-50%"><i class="h-[7px] w-px bg-[#555]"></i><i class="h-[7px] w-px bg-[#555]"></i><i class="h-[7px] w-px bg-[#555]"></i></div>
  </div>
</div>`;

const list = o => `
<div class="flex h-[446px] w-[210px] flex-col border-r border-[#8b8b90]">
  <div class="h-[23px] bg-[#6b696c]"></div>
  <div class="mt-px flex flex-1 border-t border-[#7f7f86] bg-white">
    <div class="flex w-[192px] flex-col overflow-hidden">
      ${o ? `<div class="relative h-6 border-b border-[#a3d3ea] bg-linear-to-b from-[#f3fafe] from-40% to-[#d9f0fa] to-50%"><svg class="absolute left-[104px] top-[2px] h-1 w-[7px]" viewBox="0 0 7 4"><path d="M3.500 0L7 4H0z" fill="#5d9cc0"/></svg><span class="absolute left-[27px] top-1 leading-4">Group</span></div>
      <div class="mt-[21px] flex flex-col pl-[57px]">${Array(19).fill(`<div class="h-[19px] leading-[19px]">${t('Networking', 61.5)}</div>`).join('')}</div>` : ''}
    </div>
    <div class="flex w-[17px] flex-col items-center bg-[#efeef0] py-2">
      <svg class="h-1 w-[7px]" viewBox="0 0 7 4"><path d="M3.500 0L7 4H0z" fill="#444"/></svg>
      <div class="mt-[6px] flex w-[15px] flex-col items-center justify-center gap-[2px] rounded-[2px] border border-[#98989c] bg-linear-to-r from-[#f3f3f4] from-50% to-[#d0d0d4] to-50% ${o ? 'h-[62px]' : 'h-[45px]'}"><i class="h-px w-[7px] bg-[#555]"></i><i class="h-px w-[7px] bg-[#555]"></i><i class="h-px w-[7px] bg-[#555]"></i></div>
      <svg class="mt-auto h-1 w-[7px]" viewBox="0 0 7 4"><path d="M0 0h7L3.500 4z" fill="#444"/></svg>
    </div>
  </div>
  <div class="flex h-[18px] items-start justify-end bg-[#efeef0] pr-[22px] pt-1">${o ? '<svg class="h-2 w-[5px]" viewBox="0 0 5 8"><path d="M.5 0v8l4-4z" fill="#444"/></svg>' : ''}</div>
</div>`;

const act = (icon, text, w, arrow) => `
<div class="flex h-6 items-center pl-[6px] pr-[7px]">${icon ? svg(icon, 'size-4') : '<i class="w-4"></i>'}${t(text, w, 'ml-[10px]')}${arrow ? '<svg class="ml-auto h-[9px] w-[5px]" viewBox="0 0 5 9"><path d="M0 0v9l5-4.500z"/></svg>' : ''}</div>`;
const rule = '<div class="ml-[6px] mr-[5px] h-px bg-[#ececee]"></div>';

const actions = o => `
<div class="ml-1 flex h-[446px] w-[144px] flex-col border-l border-t-2 border-[#77767a] border-r border-r-[#e2e2e4] bg-white">
  <div class="flex h-[20px] items-center border-b border-[#a09fa2] bg-[#f1eff1] pl-[6px]">${t('Actions', 41, 'font-bold')}</div>
  <div class="flex h-[25px] items-center bg-linear-to-b from-[#b5cbe6] to-[#98b4d6] pl-[7px] pr-[6px]">${o ? t('Outbound Rules', 86) : t('Inbound Rules', 76.5)}<svg class="ml-auto h-[5px] w-[10px]" viewBox="0 0 10 5"><path d="M5 0l5 5H0z"/></svg></div>
  ${act(o ? 'newout' : 'newin', 'New Rule...', 59)}${rule}
  ${act('filter', 'Filter by Profile', 79, 1)}${act('filter', 'Filter by State', 71, 1)}${act('filter', 'Filter by Group', 77.5, 1)}${rule}
  ${act('', 'View', 24.5, 1)}${rule}
  ${act('refresh', 'Refresh', 38.5)}${act('export', 'Export List...', 63)}${rule}
  ${act('help', 'Help', 24.5)}
</div>`;

const mmc = o => `
<div class="absolute left-0 top-0 h-[560px] w-[800px] rounded-t-[7px] border border-b-2 border-[#3c434d] bg-[#dae6f4] bg-linear-to-b from-[#bccbdb] to-[#dae6f4] to-[30px] px-[7px] ${SEG} text-[12px] leading-[16px]">
  <div class="flex h-[29px] items-center pl-[2px] pt-[10px] text-[#4b5a6b]">
    ${svg('fw', 'h-[17px] w-4 mb-1')}${t('Windows Firewall with Advanced Security', 221, 'ml-1 mb-1')}
    <div class="mb-1 ml-auto mr-[2px] flex gap-[2px]">${winBtn('<rect x="1.500" y="5.500" width="10" height="4" rx=".8" fill="#fff" stroke="#4b5567"/>')}${winBtn('<rect x="1.500" y="1" width="10" height="9" rx=".8" fill="#fff" stroke="#4b5567"/><rect x="4.500" y="4" width="4" height="3" fill="#c8d4e4" stroke="#4b5567"/>')}${winBtn(xGlyph)}</div>
  </div>
  <div class="flex h-[23px] items-center border-b border-[#b3b8cf] pl-[10px]" style="background-image:linear-gradient(#fff,#eceef7 42%,#d4daed 44%,#d9def0)">${t('File', 18)}${t('Action', 34.5, 'ml-[17px]')}${t('View', 24.5, 'ml-4')}${t('Help', 24.5, 'ml-4')}</div>
  <div class="flex h-[23px] items-center border-b border-[#b3b8cf] bg-linear-to-b from-[#d5daed] to-[#e0e5f5] pl-[5px] pt-px">
    ${svg('back', 'size-4')}${svg('fwd', 'size-4 ml-[7px]')}<i class="ml-[6px] h-[18px] w-px bg-[#8a8c98]"></i>
    ${svg('up', 'size-[15px] ml-[9px]')}
    <div class="ml-[4px] flex h-[21px] w-[23px] items-center justify-center rounded-[3px] border-2 border-[#70727c] bg-[#c9cdd8]">${svg('pane', 'h-[13px] w-[15px]')}</div>
    <i class="ml-[2px] h-[18px] w-px bg-[#8a8c98]"></i>${svg('export', 'size-4 ml-2')}<i class="ml-[6px] h-[18px] w-px bg-[#8a8c98]"></i>${svg('help', 'size-4 ml-2')}
    <div class="ml-[4px] h-[21px] w-[23px] rounded-[3px] border-2 border-[#70727c] bg-[#c9cdd8]"></div>
  </div>
  <div class="flex h-[453px] items-start bg-[#f0eff1] pt-[7px]">
    ${tree(o)}
    <div class="ml-[4px]">${list(o)}</div>
    ${actions(o)}
  </div>
  <div class="flex h-[24px] justify-end border-2 border-t-[3px] border-[#fbfafb] bg-[#f1ebee]"><i class="w-px ${o ? 'bg-[#d4cfd2]' : ''}"></i><i class="ml-[133px] w-px bg-[#d4cfd2]"></i><i class="ml-[84px] w-px bg-[#d4cfd2]"></i></div>
</div>`;

const tab = (text, w, width, cls = '') => `<div class="flex items-center justify-center border border-b-0 border-[#8c8b90] ${width} ${cls || 'h-[18px] bg-linear-to-b from-[#f2f1f3] from-45% to-[#d3d2d5]'}">${t(text, w)}</div>`;
const radio = (on, text, w) => `<div class="flex h-[23px] items-center"><div class="flex size-[12px] items-center justify-center rounded-full border border-[#8b9299] bg-linear-to-br from-[#d4d6d9] to-white shadow-[inset_0_0_0_1px_#f4f4f4]">${on ? '<i class="size-[7px] rounded-full bg-radial-[at_35%_35%] from-[#6fd0ee] to-[#0c3557] to-65%"></i>' : ''}</div>${t(text, w, 'ml-[7px]')}</div>`;
const btn = (text, w, on) => `<div class="flex h-[21px] w-[73px] items-center justify-center rounded-[3px] border ${on ? 'border-[#6f6e73] bg-linear-to-b from-[#f2f1f3] from-50% to-[#d2d1d4]' : 'border-[#b2b1b6] bg-[#f4f3f5] text-[#97969a]'}">${t(text, w)}</div>`;
const group = (title, w, icon, any, ip, mt) => `
<div class="relative h-[147px] w-[353px] rounded-[3px] border border-[#d6dce1] shadow-[1px_1px_0_#fff,inset_1px_1px_0_#fff] ${mt}">
  <div class="absolute -top-[9px] left-[5px] bg-[#f0eff1] px-[2px] leading-4">${t(title, w)}</div>
  <div class="flex pt-[9px]">
    ${svg(icon, 'ml-[10px] mt-[4px] h-7 w-8')}
    <div class="ml-[11px] w-[190px]">${radio(any, 'Any IP address', 70.5)}${radio(!any, 'These IP addresses:', 97)}
      <div class="ml-[18px] mt-[2px] h-[82px] w-[172px] border border-[#85848c] bg-white pl-[3px] leading-[15px]">${ip ? t(ip, 75) : ''}</div>
    </div>
    <div class="ml-[7px] mt-[49px] flex flex-col gap-2">${btn('Add...', 28, !!ip)}${btn('Edit...', 27)}${btn('Remove', 39)}</div>
  </div>
</div>`;

const dialog = o => `
<div class="absolute top-[1px] h-[559px] w-[447px] overflow-hidden rounded-t-[6px] border border-b-0 border-[#14181e] bg-[#b9cfe8] ${o ? 'left-[45px]' : 'left-[177px]'}">
  <div class="flex h-full flex-col border-x border-x-[#62c4e4] px-[6px]" style="background-image:linear-gradient(#98b4d3,#b9d1ec 28px,#b9d1ec 60px,#dbe8f6 118px,#b9d1ec 120px)">
    <div class="flex h-[28px] shrink-0 items-center pl-[4px] pt-[6px] ${SEG} text-[12px]">
      ${t(o ? 'Massi outbound Properties' : 'Massi inbound Properties', o ? 142 : 134)}
      <div class="ml-auto mr-[2px] flex h-[17px] w-[31px] items-center justify-center rounded-[2px] border border-[#5b1f1c] shadow-[inset_0_0_0_1px_rgba(255,255,255,.4)] bg-linear-to-b from-[#e0a598] from-45% to-[#bc3f2b] to-50%"><svg class="h-[11px] w-[13px]" viewBox="0 0 13 11">${xGlyph}</svg></div>
    </div>
    <div class="flex-1 bg-[#f0eff1] px-[6px] pt-[9px] font-['Liberation_Sans',Arial,sans-serif] text-[11.5px] leading-[14px]">
      <div class="flex px-[2px]">${tab('General', 37, 'w-[110px]')}${tab('Programs and Services', 109, 'w-[182px]')}${tab('Computers', 50, 'w-[120px]')}</div>
      <div class="flex items-end pl-[2px] border-[#8c8b90]">
        ${o ? tab('Protocols and Ports', 91.5, 'w-[171px]') + tab('Scope', 30, 'w-[115px]', 'h-[21px] -mt-[3px] bg-white pb-[3px] z-10 -mb-px') + tab('Advanced', 48.5, 'w-[126px]')
            : tab('Protocols and Ports', 91.5, 'w-[143px]') + tab('Scope', 30, 'w-[88px]', 'h-[21px] -mt-[3px] bg-white pb-[3px] z-10 -mb-px') + tab('Advanced', 48.5, 'w-[100px]') + tab('Users', 26, 'w-[81px]')}
      </div>
      <div class="h-[467px] w-[417px] border border-[#8a898e] bg-white pb-[3px] pl-[3px] pr-[2px] pt-0">
        <div class="h-full border-t border-white bg-[#f0eff1] pl-[13px] pt-[19px]">
          ${group('Local IP address', 79, 'pcA', true, '', '')}
          ${group('Remote IP address', 90, 'pcB', false, '192.168.32.100', 'mt-[14px]')}
          <a class="ml-px mt-[5px] block h-4 leading-[14px] text-[#1668b4]">${t('Learn more about setting the scope', 167, 'underline underline-offset-1')}</a>
        </div>
      </div>
      <div class="mt-2 flex justify-end gap-2 pr-px">
        <div class="flex h-[21px] w-[73px] items-center justify-center rounded-[3px] border-2 border-[#3fb2dc] bg-[#e9f4f9]">${t('OK', 16)}</div>
        ${btn('Cancel', 34, true)}${btn('Apply', 27)}
      </div>
    </div>
  </div>
</div>`;

const vmTaskbar = () => `
<div class="absolute bottom-0 left-0 flex h-10 w-[800px] items-center border-t border-[#5a6878]" style="background-image:linear-gradient(90deg,#8496b1 0,#8496b1 60px,#a9bfdd 100px,#a9bfdd 575px,#8394ad 610px,#8394ad)">
  ${svg('orb', 'ml-2 size-[37px]')}${svg('ie', 'ml-[28px] size-8')}${svg('explorer7', 'ml-[30px] h-[30px] w-8')}${svg('wmp', 'ml-[32px] h-[26px] w-[30px]')}
  <div class="ml-[16px] flex h-[39px] w-[60px] items-center justify-center rounded-[2px] border border-[#3d4654] bg-linear-to-br from-[#d5dfee] to-[#9fb4d2] shadow-[inset_0_0_0_1px_rgba(255,255,255,.5)]">${svg('fw', 'h-[30px] w-[30px]')}</div>
  <div class="ml-[313px] flex items-center">${svg('flag', 'size-[18px]')}${svg('bat7', 'ml-[9px] h-[17px] w-3')}${svg('net7', 'ml-[10px] size-[17px]')}${svg('spk7', 'ml-[8px] h-[17px] w-[15px]')}</div>
  <div class="ml-auto flex h-full flex-col items-center justify-center border-l border-[#6f7f98] pl-[7px] pr-[9px] ${SEG} text-[12px] leading-[17px] text-white">${t('4:55 PM', 42.5)}${t('9/28/2023', 53)}</div>
  <div class="h-full w-[14px] border border-[#2f3a48] bg-linear-to-b from-[#4a5768] to-[#8495ab] shadow-[inset_0_0_0_1px_rgba(255,255,255,.25)]"></div>
</div>`;

const desktop = o => `
<section class="absolute left-[560px] top-[223px] h-[600px] w-[800px] overflow-hidden bg-[#1f4a7c]">
  ${mmc(o)}${dialog(o)}${vmTaskbar()}
  <svg class="absolute h-[19px] w-3 ${o ? 'left-[481px] top-[581px]' : 'left-[752px] top-[596px]'}"><use href="#cursor"/></svg>
</section>`;

const app = (inner, mark = '', active = false) => `
<div class="relative flex h-[50px] w-[55px] items-center justify-center">
  ${active ? '<div class="absolute inset-y-0 left-[2px] w-[50px] rounded-[5px] border border-[#363537] bg-[#2d2c2e]"></div>' : ''}
  <div class="relative flex items-center justify-center">${inner}</div>
  ${mark}
</div>`;
const dot = '<i class="absolute bottom-px left-[24px] h-1 w-2 rounded-full bg-[#98979a]"></i>';
const bar = '<i class="absolute bottom-px left-[17px] h-1 w-5 rounded-full bg-[#4cbcf5]"></i>';

const taskbar = o => {
  const photos = app(svg('photos', 'size-7'), dot), snip = app(svg('snip', 'size-[30px]'), bar, true);
  return `
<div class="flex h-[60px] items-center border-t border-[#3b3a3d] bg-[#222022] pb-[2px]">
  ${svg('widgets', 'ml-[13px] h-7 w-[30px]')}
  ${svg('start', 'ml-[322px] size-[29px]')}
  <div class="ml-[18px] flex h-[38px] w-[273px] items-center rounded-full bg-[#f3f2f4] pl-[13px] pr-[6px]">${svg('glass', 'size-[19px]')}${t('Cerca', 43, 'ml-[13px] text-[16px] leading-5 text-[#626164]')}${svg('bing', 'ml-auto size-[26px]')}</div>
  <div class="ml-[3px] flex">
    ${app(svg('tview', 'h-7 w-[30px]'))}${app(svg('teams', 'size-[29px]'))}${app(svg('edge', 'size-[30px]'))}${app(svg('chrome', 'size-[30px]'), dot)}${app(svg('mail', 'h-7 w-[30px]'))}
    ${app(svg('amazonbg', 'h-[27px] w-[26px]') + '<b class="absolute -top-[5px] text-[22px] leading-6 text-black font-[\'Open_Sans\',sans-serif]">a</b>')}
    ${app(svg('store', 'size-[29px]'))}${app(svg('omen', 'size-[30px]'))}${app(svg('office', 'h-[29px] w-[25px]'))}${app(svg('folder', 'h-7 w-[30px]'))}${app(svg('dropbox', 'h-[26px] w-[30px]'))}
    ${app(svg('discord', 'mb-[5px] ml-[5px] size-[35px]'), dot)}${app(svg('vbox', 'mr-1 h-[29px] w-[26px]'), dot)}${app(svg('debian', 'size-[30px]'), dot)}
    ${o ? snip + photos : photos + snip}
  </div>
  <div class="ml-auto flex items-center pr-[25px]">
    ${svg('chev', 'h-2 w-[14px]')}${svg('mic', 'ml-[26px] h-5 w-[14px]')}${svg('wifi', 'ml-[23px] h-4 w-5')}${svg('vol', 'ml-[10px] h-4 w-5')}${svg('batt', 'ml-[10px] h-[13px] w-5')}
    <div class="ml-[21px] flex flex-col items-end text-[15px] leading-5 text-[#f4f4f4]">${t('12:32', 36)}${t('29/09/2023', 77)}</div>
    <div class="ml-[9px] flex size-5 items-center justify-center rounded-full bg-[#4cbcf7] text-[12px] text-[#1d2a33]">3</div>
  </div>
</div>`;
};

const screenView = o => `
<section class="relative flex h-[1080px] flex-col overflow-hidden">
  ${titleBar()}
  <div class="relative flex flex-1 bg-[#f0eff2]">
    ${notifications()}
    ${statusIcons(o ? 's-net' : 's-netg')}
  </div>
  ${taskbar(o)}
  ${desktop(o)}
</section>`;

document.getElementById('app').innerHTML = screenView(false) + screenView(true);

const fit = () => {
  const labels = [...document.querySelectorAll('[data-w]')];
  labels.forEach(e => { e.style.letterSpacing = '0px'; });
  const widths = labels.map(e => e.getBoundingClientRect().width);
  labels.forEach((e, i) => { e.style.letterSpacing = ((+e.dataset.w - widths[i]) / e.textContent.length).toFixed(3) + 'px'; });
};
fit();
addEventListener('load', fit);
document.fonts.ready.then(fit);
// refit once late stylesheets have changed the page's height
new ResizeObserver(fit).observe(document.getElementById('app'));
[50, 150, 300].forEach(ms => setTimeout(fit, ms));
</script>
</body>
</html>
